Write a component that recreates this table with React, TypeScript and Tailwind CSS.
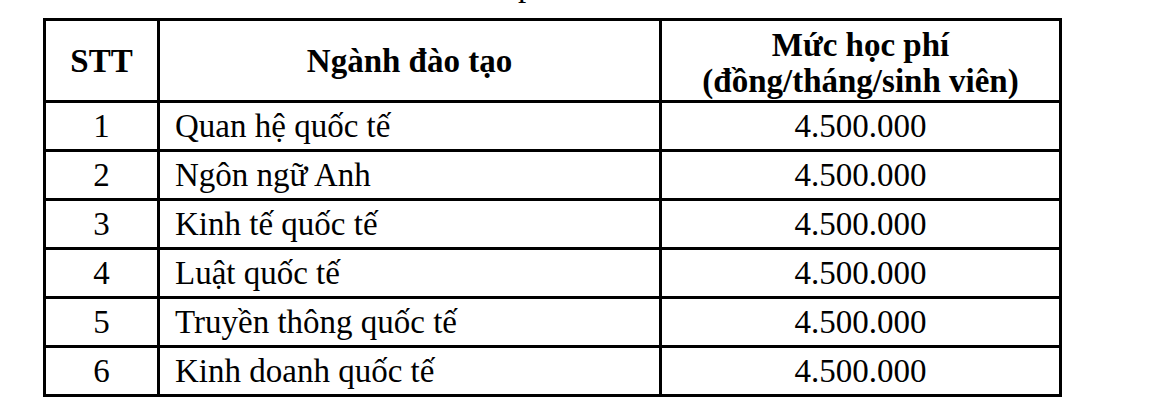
const rows = [
  { stt: 1, name: "Quan hệ quốc tế", fee: "4.500.000" },
  { stt: 2, name: "Ngôn ngữ Anh", fee: "4.500.000" },
  { stt: 3, name: "Kinh tế quốc tế", fee: "4.500.000" },
  { stt: 4, name: "Luật quốc tế", fee: "4.500.000" },
  { stt: 5, name: "Truyền thông quốc tế", fee: "4.500.000" },
  { stt: 6, name: "Kinh doanh quốc tế", fee: "4.500.000" },
];

export default function App() {
  return (
    <div className="h-[412px] w-[1158px] overflow-hidden bg-white text-black [font-family:'Liberation_Serif','Times_New_Roman',serif]">
      {/* tail of the previous paragraph, cut off by the crop */}
      <div className="h-[18px] overflow-hidden">
        <p className="-mt-[33px] pl-[518px] text-[33px] leading-[36px]">p</p>
      </div>
      <table className="ml-[43px] w-[1016px] table-fixed border-collapse border-[3px] border-black">
        <colgroup>
          <col className="w-[114px]" />
          <col className="w-[502px]" />
          <col className="w-[400px]" />
        </colgroup>
        <thead>
          <tr className="h-[82px] text-[33px] font-bold leading-[36px]">
            <th className="border-[3px] border-black text-center">STT</th>
            <th className="border-[3px] border-black text-center">Ngành đào tạo</th>
            <th className="border-[3px] border-black pt-[4px] text-center">
              Mức học phí
              <br />
              (đồng/tháng/sinh viên)
            </th>
          </tr>
        </thead>
        <tbody>
          {rows.map((r) => (
            <tr key={r.stt} className="h-[49px] text-[33px] leading-[36px]">
              <td className="border-[3px] border-black text-center">{r.stt}</td>
              <td className="border-[3px] border-black pl-[15px]">{r.name}</td>
              <td className="border-[3px] border-black text-center">{r.fee}</td>
            </tr>
          ))}
        </tbody>
      </table>
    </div>
  );
}
